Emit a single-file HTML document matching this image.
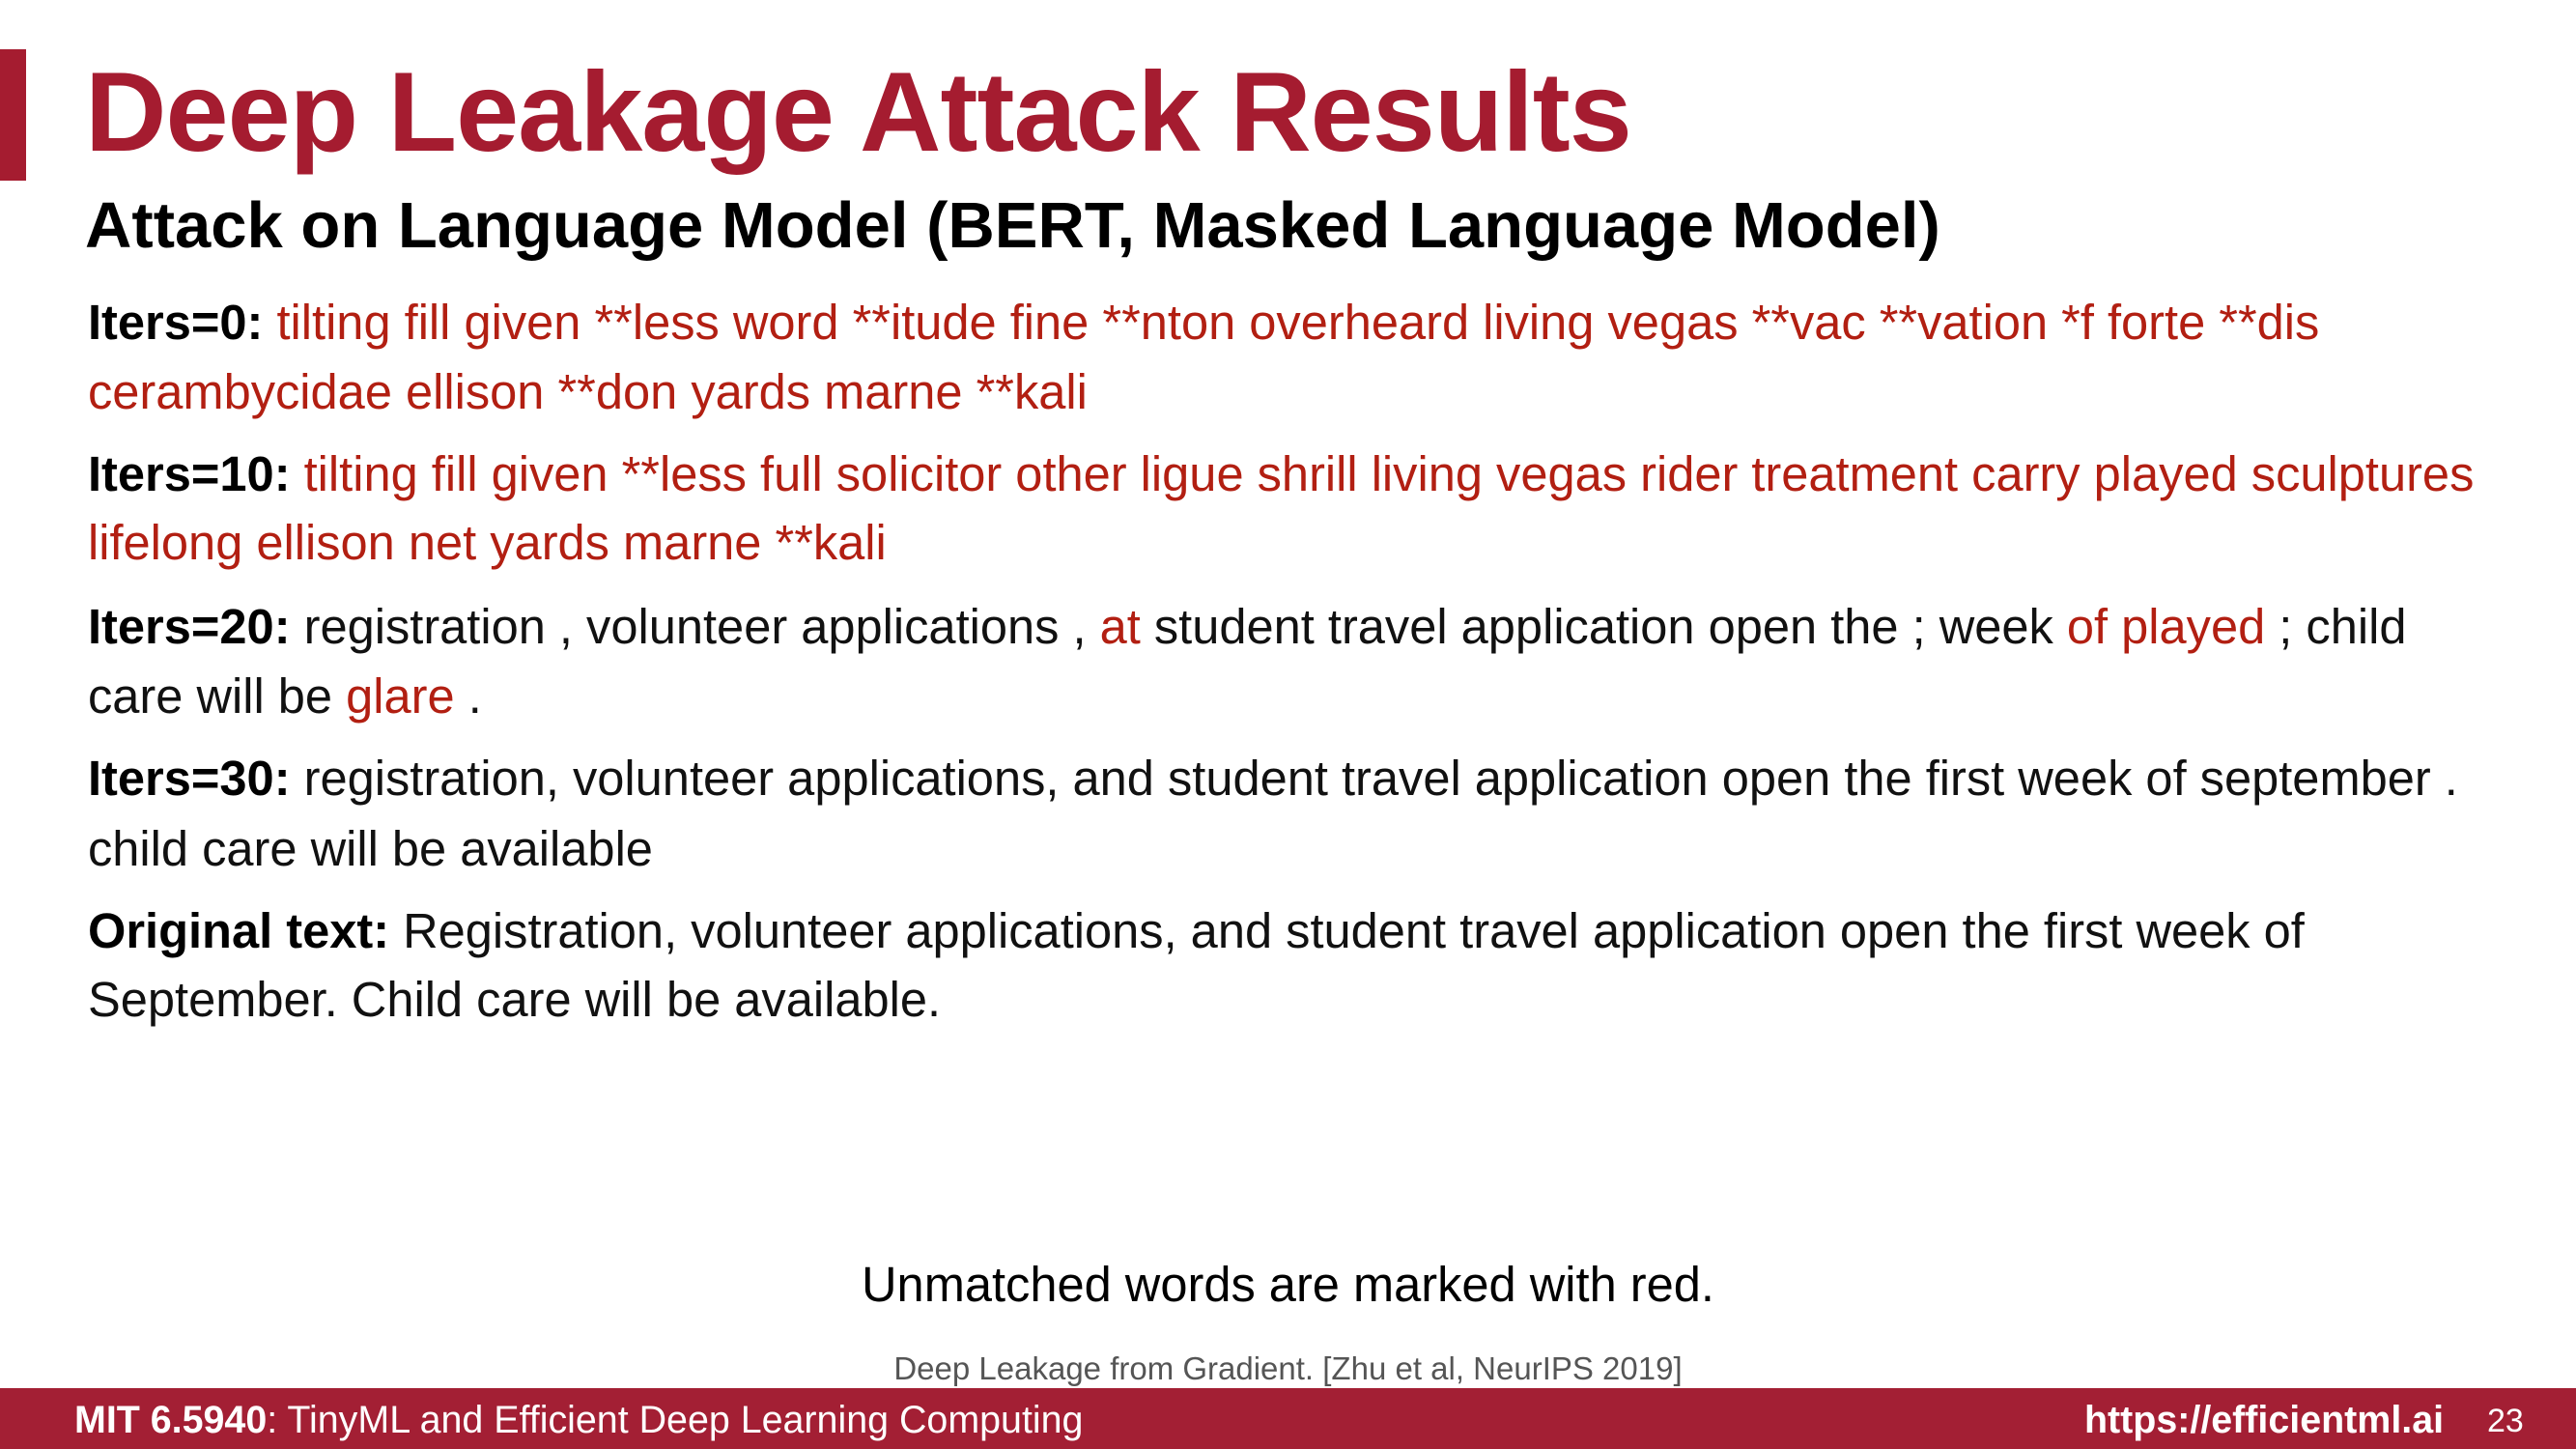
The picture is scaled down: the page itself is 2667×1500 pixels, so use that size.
<!DOCTYPE html>
<html><head><meta charset="utf-8"><style>
body{margin:0;width:2667px;height:1500px;background:#fff;position:relative;overflow:hidden;font-family:"Liberation Sans",Arial,sans-serif}
.a{position:absolute;white-space:nowrap;line-height:1}
.r{color:#b21f12}
b{font-weight:bold;color:#000}
.l{left:91px;font-size:50.6px;color:#111}
</style></head><body>
<div class="a" style="left:0;top:51px;width:27px;height:136px;background:#a51c30"></div>
<div class="a" style="left:88px;top:57px;font-size:117px;font-weight:bold;color:#a51c30;letter-spacing:-1px">Deep Leakage Attack Results</div>
<div class="a" style="left:88px;top:200px;font-size:67px;font-weight:bold;color:#000">Attack on Language Model (BERT, Masked Language Model)</div>

<div class="a l" style="top:309px"><b>Iters=0:</b> <span class="r">tilting fill given **less word **itude fine **nton overheard living vegas **vac **vation *f forte **dis</span></div>
<div class="a l" style="top:381px"><span class="r">cerambycidae ellison **don yards marne **kali</span></div>

<div class="a l" style="top:466px"><b>Iters=10:</b> <span class="r">tilting fill given **less full solicitor other ligue shrill living vegas rider treatment carry played sculptures</span></div>
<div class="a l" style="top:537px"><span class="r">lifelong ellison net yards marne **kali</span></div>

<div class="a l" style="top:624px"><b>Iters=20:</b> registration , volunteer applications , <span class="r">at</span> student travel application open the ; week <span class="r">of played</span> ; child</div>
<div class="a l" style="top:696px">care will be <span class="r">glare</span> .</div>

<div class="a l" style="top:781px"><b>Iters=30:</b> registration, volunteer applications, and student travel application open the first week of september .</div>
<div class="a l" style="top:854px">child care will be available</div>

<div class="a l" style="top:939px"><b>Original text:</b> Registration, volunteer applications, and student travel application open the first week of</div>
<div class="a l" style="top:1010px">September. Child care will be available.</div>

<div class="a" style="left:0;width:2667px;text-align:center;top:1305px;font-size:50.6px;color:#000">Unmatched words are marked with red.</div>
<div class="a" style="left:0;width:2667px;text-align:center;top:1400px;font-size:33px;color:#555">Deep Leakage from Gradient. [Zhu et al, NeurIPS 2019]</div>

<div class="a" style="left:0;top:1437px;width:2667px;height:63px;background:#a31f34"></div>
<div class="a" style="left:77px;top:1451px;font-size:39.4px;color:#fff"><span style="font-weight:bold">MIT 6.5940</span>: TinyML and Efficient Deep Learning Computing</div>
<div class="a" style="left:2158px;top:1451px;font-size:39.4px;color:#fff;font-weight:bold">https://efficientml.ai</div>
<div class="a" style="left:2575px;top:1454px;font-size:34px;color:#fff">23</div>
</body></html>
